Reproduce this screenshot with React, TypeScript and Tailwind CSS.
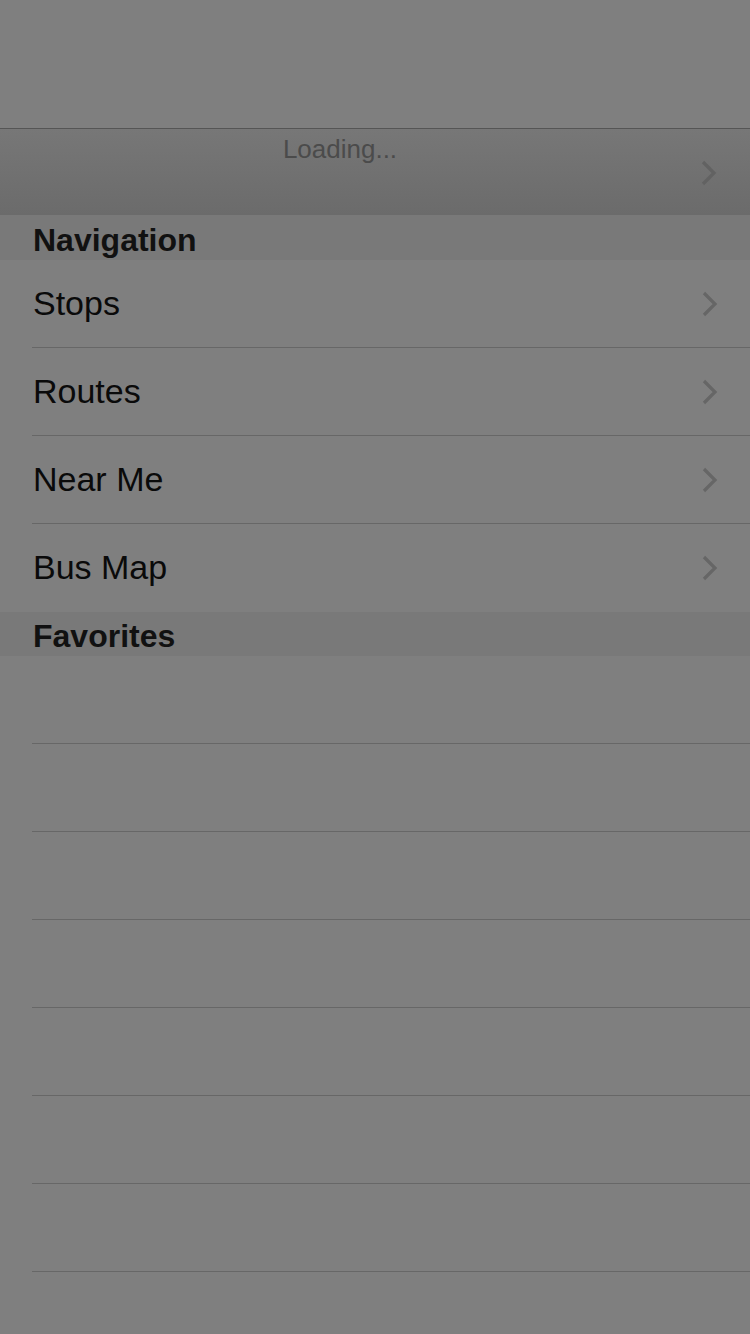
import React from 'react';

const navItems = ['Stops', 'Routes', 'Near Me', 'Bus Map'];
const emptyFavorites = 8;

const Chevron: React.FC<{ color?: string }> = ({ color = '#666666' }) => (
    <svg width="16" height="26" viewBox="0 0 16 26" fill="none" aria-hidden="true">
        <path d="M2 2 L13 13 L2 24" stroke={color} strokeWidth="3.2" strokeLinecap="butt" strokeLinejoin="miter" />
    </svg>
);

const SectionHeader: React.FC<{ title: string; height: string }> = ({ title, height }) => (
    <div className={`${height} bg-[#797979] flex items-center pl-[33px] pt-[4px]`}>
        <span className="text-[32px] leading-none font-bold text-[#111111]">{title}</span>
    </div>
);

const Row: React.FC<{ label?: string; chevron?: boolean; divider?: boolean }> = ({ label, chevron, divider = true }) => (
    <div className="h-[88px] pl-[32px] flex flex-col">
        <div className="flex-1 flex items-center pr-[32px]">
            <span className="flex-1 pl-[1px] pb-[2px] text-[34px] leading-none text-[#0a0a0a]">{label}</span>
            {chevron && <Chevron />}
        </div>
        {divider && <div className="h-px bg-[#676767]" />}
    </div>
);

export default function App() {
    return (
        <div className="w-[750px] h-[1334px] overflow-hidden bg-[#7f7f7f]" style={{ fontFamily: '"Liberation Sans", Arial, sans-serif' }}>
            {/* Top bar area */}
            <div className="h-[128px]" />
            <div className="h-px bg-[#555555]" />

            {/* Loading banner */}
            <div className="h-[86px] bg-gradient-to-b from-[#777777] to-[#6b6b6b] flex">
                <div className="w-[680px] text-center pt-[7px]">
                    <span className="text-[26px] leading-none text-[#4b4b4b]">Loading...</span>
                </div>
                <div className="flex-1 flex items-center pt-[2px] pl-[21px]">
                    <Chevron color="#626262" />
                </div>
            </div>

            <SectionHeader title="Navigation" height="h-[45px]" />
            {navItems.map((item, i) => (
                <Row key={item} label={item} chevron divider={i < navItems.length - 1} />
            ))}

            <SectionHeader title="Favorites" height="h-[44px]" />
            {Array.from({ length: emptyFavorites }).map((_, i) => (
                <Row key={i} />
            ))}
        </div>
    );
}
